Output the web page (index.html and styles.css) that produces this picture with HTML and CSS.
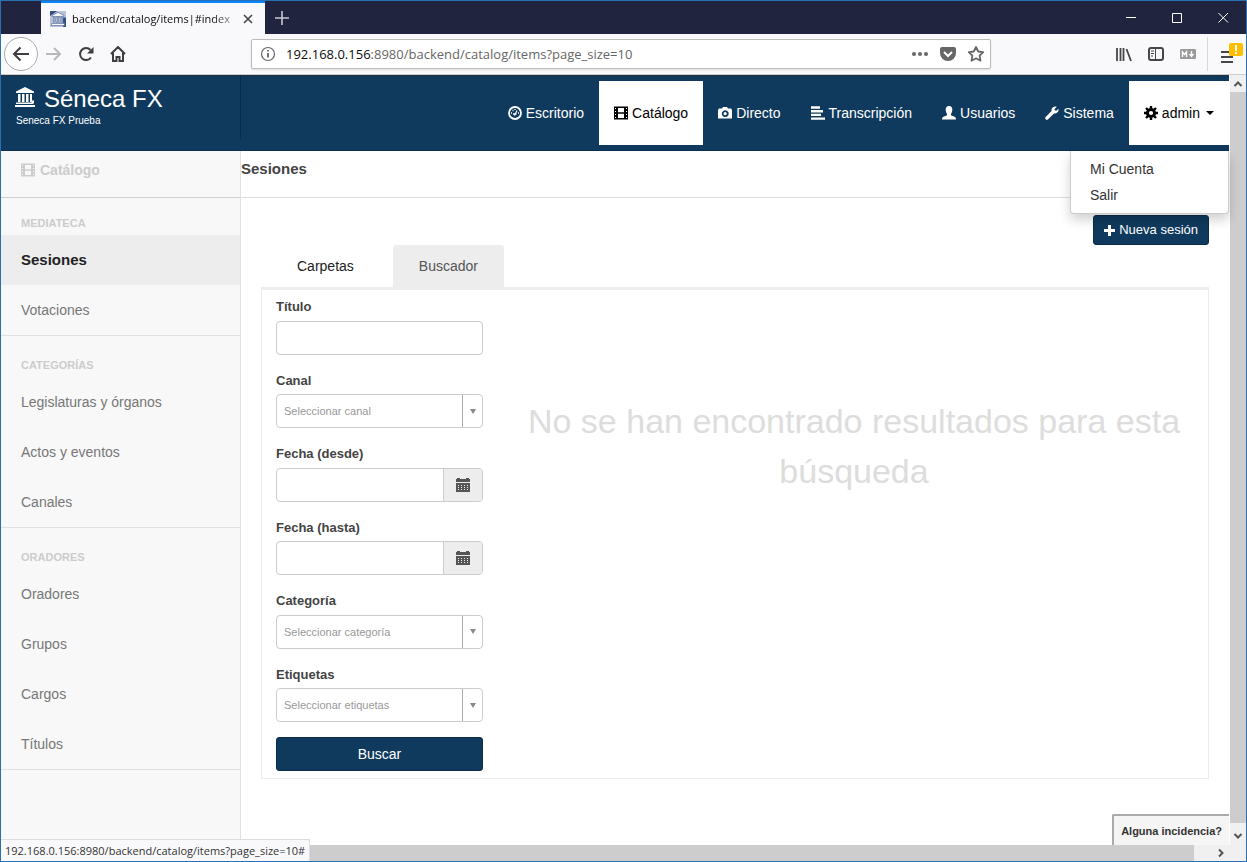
FILE: index.html
```html
<!DOCTYPE html>
<html lang="es">
<head>
<meta charset="utf-8">
<title>backend/catalog/items|#index</title>
<link rel="stylesheet" href="styles.css">
</head>
<body>
<svg class="defs" aria-hidden="true">
  <symbol id="film" viewBox="0 0 14 14"><path fill-rule="evenodd" d="M0 0.5h14v13H0zM1 2v1h1V2zm0 3v1h1V5zm0 3v1h1V8zm0 3v1h1v-1zM12 2v1h1V2zm0 3v1h1V5zm0 3v1h1V8zm0 3v1h1v-1zM4 2v4.300h6V2zm0 5.700V12h6V7.700z"/></symbol>
  <symbol id="cal" viewBox="0 0 14 14"><path fill-rule="evenodd" d="M0 1h1V0h3v1h6V0h3v1h1v3H0zM0 5h14v9H0zM2 7v1h1V7zm3 0v1h1V7zm3 0v1h1V7zm3 0v1h1V7zM2 9v1h1V9zm3 0v1h1V9zm3 0v1h1V9zm3 0v1h1V9zM2 11v1h1v-1zm3 0v1h1v-1zm3 0v1h1v-1zm3 0v1h1v-1z"/></symbol>
  <symbol id="bank" viewBox="0 0 20 20"><path d="M10 0L19 4.500V6H1V4.500zM3 7h2.500v8H3zM7 7h2.500v8H7zM11 7h2.500v8H11zM15 7h2v8h-2zM1 15.500h17.500V17H1zM0 18h20v2H0zM16.500 13.500h2.500V16h-2.500z"/></symbol>
  <symbol id="down" viewBox="0 0 10 10"><path d="M1.500 3L5 6.500 8.500 3" fill="none" stroke="currentColor" stroke-width="2"/></symbol>
</svg>
<div class="window">
  <div class="titlebar">
    <div class="tab">
      <svg class="favicon" viewBox="0 0 22 22"><rect width="22" height="22" fill="#b9c4dc"/><path d="M0 0h10L0 7zM22 22V9h-4v13z" fill="#31507f"/><g transform="translate(2 2) scale(.9)" fill="#fff" stroke="#4c6693" stroke-width="1"><path d="M10 0L19 4.500V6H1V4.500zM3 7h2v8H3zM7 7h2v8H7zM11 7h2v8h-2zM15 7h2v8h-2zM0 17h20v3H0z"/></g></svg>
      <span class="tab-text">backend/catalog/items|#index</span>
      <button class="plain" aria-label="Cerrar pestaña"><svg width="10" height="10"><path d="M1 1l8 8M9 1L1 9" stroke="#444" stroke-width="1.600"/></svg></button>
    </div>
    <button class="plain new-tab" aria-label="Nueva pestaña"><svg width="14" height="14"><path d="M7 0v14M0 7h14" stroke="#c7c8d2" stroke-width="1.600"/></svg></button>
    <div class="controls">
      <button class="plain" aria-label="Minimizar"><svg width="11" height="11"><path d="M0 5.500h10" stroke="#fff"/></svg></button>
      <button class="plain" aria-label="Maximizar"><svg width="11" height="11"><path d="M.5 1.500h9v9h-9z" fill="none" stroke="#fff"/></svg></button>
      <button class="plain" aria-label="Cerrar"><svg width="11" height="11"><path d="M.5 1l9.500 9.500M10 1L.5 10.500" stroke="#fff"/></svg></button>
    </div>
  </div>
  <div class="toolbar">
    <div class="tools-left">
      <button class="back" aria-label="Atrás"><svg width="18" height="16"><path d="M17 8H2M8.500 1.500L2 8l6.500 6.500" fill="none" stroke="#3e3e42" stroke-width="2"/></svg></button>
      <button class="plain" aria-label="Adelante"><svg width="16" height="16"><path d="M0 8h14M8 2l6 6-6 6" fill="none" stroke="#b9b9bc" stroke-width="2"/></svg></button>
      <button class="plain" aria-label="Recargar"><svg width="16" height="16"><path d="M13 11.500A6 6 0 1 1 12.500 4" fill="none" stroke="#3e3e42" stroke-width="2"/><path d="M15.500 1v6.500H9z" fill="#3e3e42"/></svg></button>
      <button class="plain" aria-label="Inicio"><svg width="16" height="16"><path d="M1 8l7-7 7 7M3 7v8h3.500v-4h3v4H13V7" fill="none" stroke="#3e3e42" stroke-width="2"/></svg></button>
    </div>
    <div class="address">
      <svg width="16" height="16"><circle cx="8" cy="8" r="6.500" fill="none" stroke="#666" stroke-width="1.200"/><path d="M8 7v4.500M8 4v1.600" stroke="#666" stroke-width="1.800"/></svg>
      <span class="url">192.168.0.156<span class="path">:8980/backend/catalog/items?page_size=10</span></span>
      <svg width="16" height="16" fill="#666"><circle cx="2" cy="8" r="2"/><circle cx="8" cy="8" r="2"/><circle cx="14" cy="8" r="2"/></svg>
      <svg width="16" height="16"><path d="M2 1h12q2 0 2 2v4a8 8 0 0 1-16 0V3q0-2 2-2z" fill="#666"/><path d="M4 6l4 4 4-4" fill="none" stroke="#fff" stroke-width="2"/></svg>
      <svg width="16" height="16"><path d="M8 1l2.200 4.500 5 .7-3.600 3.500.9 5L8 12.300l-4.500 2.400.9-5L.8 6.200l5-.7z" fill="none" stroke="#666" stroke-width="1.800" stroke-linejoin="round"/></svg>
    </div>
    <div class="tools-right">
      <svg width="16" height="16"><path d="M1 2v13M4.500 2v13M7.500 2v13M10.500 3l4.500 12" fill="none" stroke="#45454a" stroke-width="1.800"/></svg>
      <svg width="16" height="16"><rect x="1" y="2" width="14" height="12" rx="2" fill="none" stroke="#45454a" stroke-width="2"/><path d="M7.500 2v12M3 5h3M3 7.500h3M3 10h2" stroke="#45454a"/></svg>
      <svg width="16" height="16"><rect y="3" width="16" height="10" rx="1" fill="#999"/><path d="M2.500 11V6l2 2.500L6.500 6v5M11.500 5v5M9.500 8l2 2.500 2-2.500" fill="none" stroke="#fff" stroke-width="1.400"/></svg>
      <button class="plain menu" aria-label="Menú"><svg width="24" height="24"><path d="M1 10h11M1 15h12M1 20h12" stroke="#45454a" stroke-width="2"/><rect x="9" y="1" width="14" height="13" rx="2" fill="#ffbf00"/><path d="M16 3v6M16 10v2" stroke="#fff" stroke-width="2"/></svg></button>
    </div>
  </div>
  <div class="viewport">
    <div class="page">
      <header class="header">
        <div class="brand">
          <a href="#"><svg width="20" height="20" fill="#fff"><use href="#bank"/></svg>Séneca FX</a>
          <small>Seneca FX Prueba</small>
        </div>
        <nav class="nav">
          <a href="#"><svg width="14" height="14" fill="none" stroke="#fff"><circle cx="7" cy="7" r="6" stroke-width="1.800"/><path d="M6.500 9.500L9 4.500M5 8h3.500M3 7h1M10 7h1M4.500 4.500h1M7 3v1" stroke-width="1.300"/></svg>Escritorio</a>
          <a href="#" class="on"><svg width="14" height="14"><use href="#film"/></svg>Catálogo</a>
          <a href="#"><svg width="14" height="14" fill="#fff"><path fill-rule="evenodd" d="M4 2.500L5 1h4l1 1.500h3L14 4v8.500H0V4l1-1.500zM7.200 4.300a3.400 3.400 0 1 0 .1 0zm0 1.800a1.600 1.600 0 1 1-.1 0z"/></svg>Directo</a>
          <a href="#"><svg width="14" height="14"><path d="M0 1.500h9M0 5.200h12M0 8.900h10M0 12.600h14" stroke="#fff" stroke-width="2.400"/></svg>Transcripción</a>
          <a href="#"><svg width="14" height="14" fill="#fff"><path d="M7 0c2.500 0 3.500 1.800 3.300 4C10.200 6 9.300 7.200 9 8v1.200l4 1.800q1 .5 1 2.500H0Q0 11.500 1 11l4-1.800V8C4.700 7.200 3.800 6 3.700 4 3.500 1.800 4.500 0 7 0z"/></svg>Usuarios</a>
          <a href="#"><svg width="14" height="14" fill="#fff"><path d="M13.500 2.800L11 5 9.300 3.200l2.500-2.500A4 4 0 0 0 6.500 5L.7 10.900a1.600 1.600 0 0 0 2.400 2.400L9 7.500a4 4 0 0 0 4.500-4.700z"/></svg>Sistema</a>
          <div class="account">
            <button class="on"><svg width="14" height="14"><circle cx="7" cy="7" r="3.600" fill="none" stroke="#000" stroke-width="3"/><path d="M7 0v3M7 11v3M0 7h3M11 7h3M2 2l2 2M10 10l2 2M12 2l-2 2M4 10l-2 2" stroke="#000" stroke-width="2.400"/></svg>admin<i class="caret"></i></button>
            <div class="dropdown"><a href="#">Mi Cuenta</a><a href="#">Salir</a></div>
          </div>
        </nav>
      </header>
      <div class="body">
        <aside class="sidebar">
          <h2><svg width="14" height="14" fill="#ccc"><use href="#film"/></svg>Catálogo</h2>
          <section><h3>MEDIATECA</h3><a href="#" class="current">Sesiones</a><a href="#">Votaciones</a></section>
          <section><h3>CATEGORÍAS</h3><a href="#">Legislaturas y órganos</a><a href="#">Actos y eventos</a><a href="#">Canales</a></section>
          <section><h3>ORADORES</h3><a href="#">Oradores</a><a href="#">Grupos</a><a href="#">Cargos</a><a href="#">Títulos</a></section>
        </aside>
        <main class="main">
          <h1>Sesiones</h1>
          <div class="content">
            <button class="primary new"><svg width="11" height="11"><path d="M5.500 0v11M0 5.500h11" stroke="#fff" stroke-width="3"/></svg>Nueva sesión</button>
            <div class="tabs"><a href="#">Carpetas</a><a href="#" class="selected">Buscador</a></div>
            <div class="panel">
              <form>
                <div class="field"><label for="titulo">Título</label><input class="box" id="titulo" type="text"></div>
                <div class="field"><label for="canal">Canal</label><div class="box pick"><select id="canal"><option>Seleccionar canal</option></select><i></i></div></div>
                <div class="field"><label for="desde">Fecha (desde)</label><div class="box date"><input id="desde" type="text"><button type="button" aria-label="Elegir fecha"><svg width="14" height="14" fill="#555"><use href="#cal"/></svg></button></div></div>
                <div class="field"><label for="hasta">Fecha (hasta)</label><div class="box date"><input id="hasta" type="text"><button type="button" aria-label="Elegir fecha"><svg width="14" height="14" fill="#555"><use href="#cal"/></svg></button></div></div>
                <div class="field"><label for="cat">Categoría</label><div class="box pick"><select id="cat"><option>Seleccionar categoría</option></select><i></i></div></div>
                <div class="field"><label for="etq">Etiquetas</label><div class="box pick"><select id="etq"><option>Seleccionar etiquetas</option></select><i></i></div></div>
                <button class="primary search">Buscar</button>
              </form>
              <p class="empty">No se han encontrado resultados para esta búsqueda</p>
            </div>
          </div>
        </main>
      </div>
      <button class="incident">Alguna incidencia?</button>
    </div>
    <div class="vbar"><svg class="up" width="10" height="10"><use href="#down"/></svg><div class="thumb"></div><svg width="10" height="10"><use href="#down"/></svg></div>
    <div class="hbar"><div class="thumb"></div><svg class="right" width="10" height="10"><use href="#down"/></svg></div>
  </div>
  <div class="status">192.168.0.156:8980/backend/catalog/items?page_size=10#</div>
</div>
</body>
</html>
```
FILE: styles.css
```css
* { box-sizing: border-box; }
body { margin: 0; font: 14px/20px "Liberation Sans", Arial, sans-serif; color: #333; }
a { color: inherit; text-decoration: none; }
button, input, select { font: inherit; color: inherit; }
svg { display: block; flex: none; }
h1, h2, h3, p { margin: 0; }
.defs { position: absolute; width: 0; height: 0; }
.plain { display: flex; align-items: center; justify-content: center; padding: 0; border: 0; background: none; }

.window { position: relative; display: flex; flex-direction: column; height: 100vh; border: 1px solid #2a70b0; }
.titlebar { display: flex; align-items: stretch; height: 33px; background: #20243f; padding-left: 40px; }
.tab { display: flex; align-items: center; gap: 6px; width: 224px; padding: 0 12px 0 9px; background: #f9f9fb; border-top: 2px solid #0a84ff; font: 11px/16px "Open Sans", sans-serif; color: #0c0c0d; }
.favicon { width: 16px; height: 16px; }
.tab-text { flex: 1; white-space: nowrap; -webkit-mask-image: linear-gradient(to right, #000 85%, transparent 105%); mask-image: linear-gradient(to right, #000 85%, transparent 105%); }
.new-tab { width: 34px; }
.controls { display: flex; margin-left: auto; }
.controls button { width: 46px; }

.toolbar { display: flex; align-items: center; height: 41px; background: #f9f9fb; border-bottom: 1px solid #ccc; }
.tools-left { display: flex; align-items: center; gap: 16px; width: 250px; padding-left: 3px; }
.tools-left .plain:nth-child(2) { margin-left: -8px; }
.back { display: flex; align-items: center; justify-content: center; width: 34px; height: 34px; padding: 0; border: 1px solid #aaa; border-radius: 50%; background: #fff; }
.address { display: flex; align-items: center; gap: 12px; width: 740px; height: 30px; padding: 0 6px 0 8px; background: #fff; border: 1px solid #bbb; border-radius: 2px; box-shadow: 0 1px 2px #ddd; }
.url { flex: 1; margin-left: -2px; font: 13px/20px "Open Sans", sans-serif; color: #0c0c0d; white-space: nowrap; }
.path { color: #666; }
.tools-right { display: flex; align-items: center; gap: 16px; margin-left: auto; padding-right: 2px; }
.menu { height: 34px; padding-left: 12px; margin-left: -5px; border-left: 1px solid #d7d7db; }

.viewport { flex: 1; display: grid; grid-template: minmax(0, 1fr) 16px / minmax(0, 1fr) 16px; min-height: 0; }
.page { position: relative; display: flex; flex-direction: column; background: #fff; padding-right: 1px; }
.vbar { display: flex; flex-direction: column; align-items: center; gap: 3px; padding: 4px 0; background: #f0f0f0; color: #555; }
.vbar .thumb { flex: 1; width: 16px; margin-bottom: 5px; background: #cdcdcd; }
.up { transform: rotate(180deg); }
.hbar { grid-column: 1 / 3; display: flex; align-items: center; background: #f0f0f0; color: #555; }
.hbar .thumb { flex: 1; height: 16px; background: #cdcdcd; margin: 0 22px 0 16px; }
.hbar .right { margin-right: 20px; transform: rotate(-90deg); }

.header { display: flex; height: 76px; background: #103a5d; color: #fff; border-top: 1px solid #1d3145; border-bottom: 1px solid #0b2f50; }
.brand { width: 240px; height: 63px; padding: 10px 14px 0; border-right: 1px solid #0a2c49; }
.brand a { display: flex; align-items: center; gap: 9px; font-size: 24px; line-height: 26px; }
.brand svg { margin-bottom: 5px; }
.brand small { display: block; padding-left: 1px; font-size: 10px; line-height: 18px; }
.nav { display: flex; flex: 1; justify-content: flex-end; padding: 5px 0; }
.nav > a, .account > button { display: flex; align-items: center; gap: 4px; height: 64px; padding: 0 15px; border: 0; background: none; }
.nav .on { background: #fff; color: #000; }
.account { position: relative; }
.caret { margin-left: 2px; border: 4px solid transparent; border-top-color: #000; border-bottom: 0; }
.dropdown { position: absolute; z-index: 2; top: 70px; right: 0; width: 159px; padding: 5px 0; background: #fff; color: #333; border: 1px solid #ccc; border-top: 0; border-radius: 0 0 4px 4px; box-shadow: 0 6px 12px rgba(0, 0, 0, .18); }
.dropdown a { display: block; padding: 0 19px; line-height: 26px; }

.body { flex: 1; display: flex; min-height: 0; }
.sidebar { width: 240px; background: #f8f8f8; border-right: 1px solid #e1e1e1; color: #777; }
.sidebar h2 { display: flex; align-items: center; gap: 5px; height: 47px; padding: 0 20px 8px; border-bottom: 1px solid #d0d0d0; font-size: 14px; color: #ccc; }
.sidebar section { padding-top: 22px; border-bottom: 1px solid #e1e1e1; }
.sidebar h2 + section { padding-top: 18px; }
.sidebar h3 { padding: 0 20px 4px; font-size: 11px; line-height: 15px; color: #ccc; }
.sidebar a { display: block; padding: 0 20px; line-height: 50px; }
.sidebar .current { background: #ededed; color: #222; font-size: 15px; font-weight: bold; }

.main { flex: 1; min-width: 0; }
.main h1 { height: 47px; border-bottom: 1px solid #ddd; font-size: 15px; line-height: 36px; color: #444; }
.content { display: flex; flex-direction: column; padding: 17px 20px 0; }
.primary { display: flex; align-items: center; justify-content: center; border: 1px solid #0c2c48; border-radius: 3px; background: #103a5d; color: #fff; }
.new { align-self: flex-end; gap: 4px; height: 30px; padding: 0 10px; font-size: 13px; }
.tabs { display: flex; gap: 13px; padding-left: 10px; color: #222; }
.tabs a { padding: 0 26px; line-height: 42px; border-radius: 3px 3px 0 0; }
.tabs .selected { background: #ededed; color: #555; }
.panel { display: grid; grid-template-columns: 207px minmax(0, 1fr); gap: 31px; padding: 7px 14px; border: 1px solid #ededed; border-top-width: 3px; }
.field { margin-bottom: 15px; }
.field label { display: block; margin-bottom: 4px; font-size: 13px; font-weight: bold; line-height: 1.5; color: #444; }
.field + .field label { padding-top: 1px; }
.box { display: flex; width: 100%; height: 34px; border: 1px solid #ccc; border-radius: 4px; background: #fff; overflow: hidden; }
.box input, .box select { flex: 1; min-width: 0; border: 0; background: none; appearance: none; padding: 0 7px; }
.pick select { font-size: 11px; color: #999; }
.pick i { display: flex; align-items: center; justify-content: center; width: 20px; border-left: 1px solid #aaa; }
.pick i::before { content: ""; border: 3px solid transparent; border-top: 5px solid #888; border-bottom: 0; }
.date button { display: flex; align-items: center; justify-content: center; width: 39px; padding: 0; border: 0; border-left: 1px solid #ccc; background: #ededed; }
.search { width: 100%; height: 34px; }
.empty { padding-top: 99px; font-size: 34px; line-height: 50px; text-align: center; color: #ddd; }

.incident { position: absolute; right: 1px; bottom: 0; height: 31px; padding: 0 7px; border: 0; border-top: 2px solid #aaa; border-left: 2px solid #aaa; border-radius: 2px 0 0 0; background: #f5f5f5; font-size: 11px; font-weight: bold; color: #333; }
.status { position: absolute; left: 0; bottom: 0; height: 22px; padding: 0 4px; background: #f9f9fb; border: 1px solid #ddd; border-width: 1px 1px 0 0; font: 11px/21px "Open Sans", sans-serif; color: #333; }
```
